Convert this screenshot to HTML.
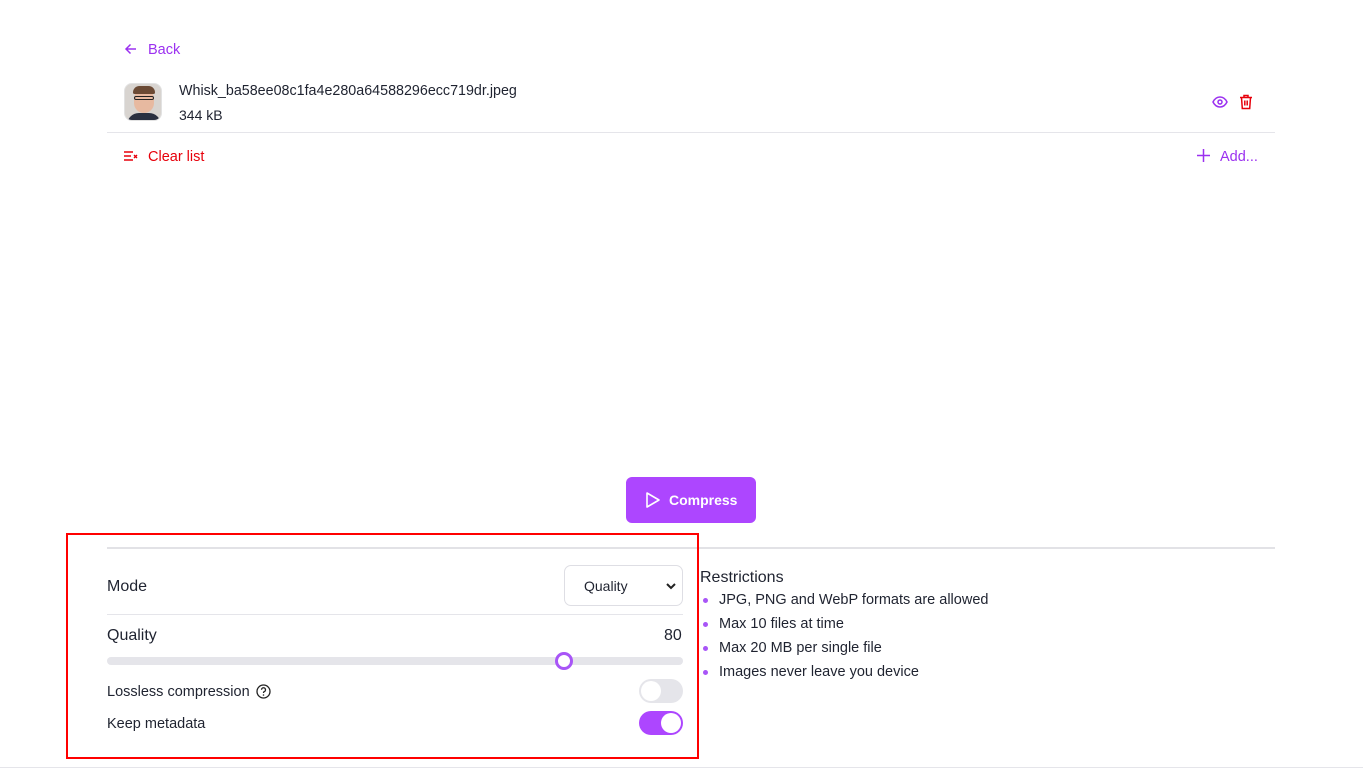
<!DOCTYPE html>
<html><head><meta charset="utf-8"><style>
*{box-sizing:border-box;margin:0;padding:0}
body{width:1363px;height:769px;background:#fff;font-family:"Liberation Sans",sans-serif;color:#1f2330;position:relative;overflow:hidden}
.a{position:absolute;white-space:nowrap}
.p{color:#9b30f0}
.r{color:#e7000b}
.line{position:absolute;height:1px;background:#e5e5ea}
.li{height:24px;line-height:24px;position:relative;padding-left:19px}
.li:before{content:"";position:absolute;left:3px;top:10px;width:5px;height:5px;border-radius:50%;background:#a855f7}
</style></head><body>
<div class="a p" style="left:124px;top:41px;font-size:14.5px;line-height:18px">
<svg width="14" height="14" viewBox="0 0 14 14" style="vertical-align:-2px;margin-right:10px"><path d="M12 7H2M6.5 2.5L2 7l4.5 4.5" stroke="#9b30f0" stroke-width="1.5" fill="none"/></svg>Back</div>
<div class="a" style="left:124px;top:83px;width:38px;height:38px;border-radius:8px;background:#d8d4d0;border:1px solid #e2e2e2;overflow:hidden">
<div style="position:absolute;left:9px;top:5px;width:20px;height:24px;border-radius:10px;background:#e7b9a0"></div>
<div style="position:absolute;left:8px;top:2px;width:22px;height:8px;border-radius:8px 8px 2px 2px;background:#6b4a35"></div>
<div style="position:absolute;left:9px;top:12px;width:20px;height:4px;border:1.5px solid #222;border-radius:2px"></div>
<div style="position:absolute;left:2px;top:29px;width:34px;height:14px;border-radius:12px 12px 0 0;background:#2a3040"></div>
</div>
<div class="a" style="left:179px;top:82px;font-size:14.3px;line-height:18px">Whisk_ba58ee08c1fa4e280a64588296ecc719dr.jpeg</div>
<div class="a" style="left:179px;top:106px;font-size:14px;line-height:18px">344 kB</div>
<svg class="a" style="left:1212px;top:95px" width="16" height="14" viewBox="0 0 16 14"><path d="M1 7C3 3 5.5 2 8 2s5 1 7 5c-2 4-4.5 5-7 5S3 11 1 7z" stroke="#9b30f0" stroke-width="1.5" fill="none"/><circle cx="8" cy="7" r="2" stroke="#9b30f0" stroke-width="1.5" fill="none"/></svg>
<svg class="a" style="left:1239px;top:94px" width="14" height="16" viewBox="0 0 14 16"><path d="M1 3.5h12M5 3.5V1.5h4v2M2.5 3.5l.8 11h7.4l.8-11M5.8 6.5v5M8.2 6.5v5" stroke="#e7000b" stroke-width="1.5" fill="none"/></svg>
<div class="line" style="left:107px;top:132px;width:1168px"></div>
<div class="a r" style="left:124px;top:148px;font-size:14.5px;line-height:18px">
<svg width="14" height="12" viewBox="0 0 14 12" style="vertical-align:-1px;margin-right:10px"><path d="M0 2h9M0 6h7M0 10h9M10 5l3 3M13 5l-3 3" stroke="#e7000b" stroke-width="1.4" fill="none"/></svg>Clear list</div>
<div class="a p" style="left:1197px;top:148px;font-size:14.5px;line-height:18px">
<svg width="13" height="13" viewBox="0 0 13 13" style="vertical-align:-1px;margin-right:10px"><path d="M6.5 0v13M0 6.5h13" stroke="#9b30f0" stroke-width="1.5"/></svg>Add...</div>
<div class="a" style="left:626px;top:477px;width:130px;height:46px;border-radius:6px;background:#ad46ff;color:#fff;font-weight:bold;font-size:14px;line-height:46px;padding-left:19px">
<svg width="16" height="18" viewBox="0 0 16 18" style="vertical-align:-4px;margin-right:8px"><path d="M2 2l12 7-12 7z" stroke="#fff" stroke-width="1.6" fill="none" stroke-linejoin="round"/></svg>Compress</div>
<div class="line" style="left:107px;top:547px;width:1168px;background:#e2e2e6;height:2px"></div>
<div class="a" style="left:66px;top:533px;width:633px;height:226px;border:2px solid #f00"></div>
<div class="a" style="left:107px;top:577px;font-size:16px;line-height:20px">Mode</div>
<div class="a" style="left:564px;top:565px;width:119px;height:41px;border:1px solid #dedee4;border-radius:7px;font-size:14px;line-height:40px;padding-left:19px">Quality
<svg width="10" height="7" viewBox="0 0 10 7" style="position:absolute;right:6px;top:17px"><path d="M1 1l4 4 4-4" stroke="#222" stroke-width="2" fill="none"/></svg></div>
<div class="line" style="left:107px;top:614px;width:576px"></div>
<div class="a" style="left:107px;top:626px;font-size:16px;line-height:20px">Quality</div>
<div class="a" style="left:664px;top:626px;font-size:16px;line-height:20px">80</div>
<div class="a" style="left:107px;top:657px;width:576px;height:8px;border-radius:4px;background:#e5e5ea"></div>
<div class="a" style="left:555px;top:652px;width:18px;height:18px;border-radius:50%;border:3px solid #a855f7;background:#fff"></div>
<div class="a" style="left:107px;top:683px;font-size:14.5px;line-height:18px">Lossless compression
<svg width="15" height="15" viewBox="0 0 15 15" style="vertical-align:-3px;margin-left:2px"><circle cx="7.5" cy="7.5" r="6.5" stroke="#222" stroke-width="1.3" fill="none"/><path d="M5.5 5.8a2 2 0 1 1 2.5 1.9c-.5.2-.5.6-.5 1.3" stroke="#222" stroke-width="1.3" fill="none"/><circle cx="7.5" cy="11" r=".8" fill="#222"/></svg></div>
<div class="a" style="left:639px;top:679px;width:44px;height:24px;border-radius:12px;background:#e5e5ea"><div style="position:absolute;left:2px;top:2px;width:20px;height:20px;border-radius:50%;background:#fff"></div></div>
<div class="a" style="left:107px;top:715px;font-size:14.5px;line-height:18px">Keep metadata</div>
<div class="a" style="left:639px;top:711px;width:44px;height:24px;border-radius:12px;background:#ad46ff"><div style="position:absolute;left:22px;top:2px;width:20px;height:20px;border-radius:50%;background:#fff"></div></div>
<div class="a" style="left:700px;top:568px;font-size:16px;line-height:20px">Restrictions</div>
<div class="a" style="left:700px;top:588px;font-size:14.5px">
<div class="li">JPG, PNG and WebP formats are allowed</div>
<div class="li">Max 10 files at time</div>
<div class="li">Max 20 MB per single file</div>
<div class="li">Images never leave you device</div>
</div>
<div class="line" style="left:0;top:767px;width:1363px"></div>
</body></html>
